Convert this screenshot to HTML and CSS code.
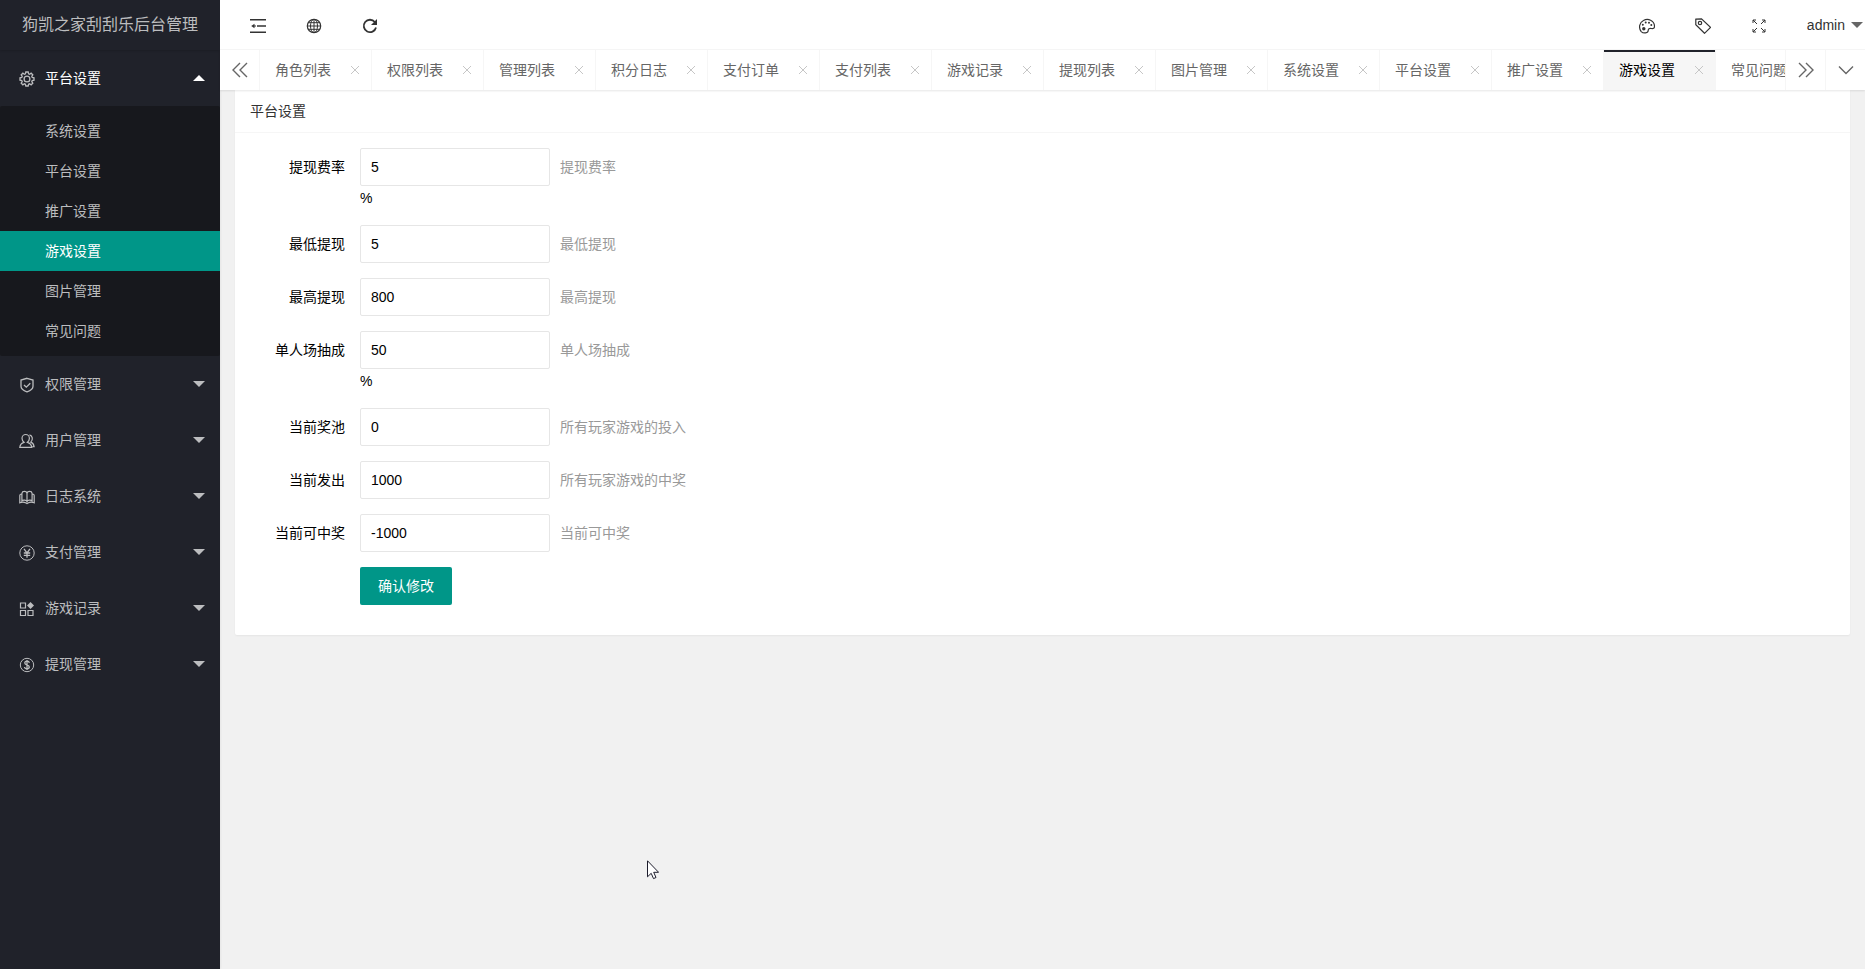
FILE: index.html
```html
<!DOCTYPE html>
<html lang="zh-CN">
<head>
<meta charset="utf-8">
<title>狗凯之家刮刮乐后台管理</title>
<link rel="stylesheet" href="styles.css">
</head>
<body>
<div class="app">
  <aside class="side">
    <div class="logo">狗凯之家刮刮乐后台管理</div>
    <nav class="menu">
      <a class="item open"><svg class="ico" viewBox="0 0 16 16"><path stroke-width="1.300" d="M6.800 1h2.400l.4 1.800 1 .4 1.500-1 1.700 1.700-1 1.500.4 1 1.800.4v2.400l-1.800.4-.4 1 1 1.500-1.700 1.700-1.500-1-1 .4-.4 1.800H6.800l-.4-1.800-1-.4-1.500 1-1.700-1.700 1-1.500-.4-1L1 9.200V6.800l1.800-.4.4-1-1-1.500 1.700-1.700 1.500 1 1-.4z"/><circle cx="8" cy="8" r="2.900" stroke-width="1.300"/></svg><span>平台设置</span><i class="tri up"></i></a>
      <div class="sub">
        <a>系统设置</a><a>平台设置</a><a>推广设置</a><a class="on">游戏设置</a><a>图片管理</a><a>常见问题</a>
      </div>
      <a class="item"><svg class="ico" viewBox="0 0 16 16"><path d="M8 1.300 14 3v6.200c0 2.500-3 4.600-6 5.600-3-1-6-3.100-6-5.600V3zM5 8l2.300 2.200 4-4" stroke-width="1.300"/></svg><span>权限管理</span><i class="tri"></i></a>
      <a class="item"><svg class="ico" viewBox="0 0 16 16"><path stroke-width="1.200" d="M5 9.300C3.800 8.300 3 6.800 3 5.200a3.700 3.700 0 0 1 7.400 0c0 1.600-.8 3.100-2 4.100 2.500.7 4 2.200 4.400 5H.8c.3-2.800 1.800-4.300 4.200-5zM10.500 1.900c3.200.9 3.800 4.600 1.300 7.200 1.900.7 3 2.300 3.300 4.500h-1.600"/></svg><span>用户管理</span><i class="tri"></i></a>
      <a class="item"><svg class="ico" viewBox="0 0 16 16"><path stroke-width="1.200" d="M8 4.300v9M8 4.300C7.500 1.700 3.300 1.700 2.900 4.300v7.500c1.300-1 4-.8 5.100.7 1.100-1.500 3.800-1.700 5.100-.7V4.300C12.700 1.700 8.500 1.700 8 4.300M2.700 5C1.400 5 .8 5.500.8 6.500v7.300c2-.8 4.200-.8 5.700-.1L8 14.500l1.500-.8c1.500-.7 3.700-.7 5.700.1V6.500c0-1-.6-1.500-1.900-1.500"/></svg><span>日志系统</span><i class="tri"></i></a>
      <a class="item"><svg class="ico" viewBox="0 0 16 16"><circle cx="8" cy="8" r="7.200"/><path d="m5 3.800 3 4 3-4M8 7.800v5M4.800 8h6.400M4.800 10.300h6.400" stroke-width="1.300"/></svg><span>支付管理</span><i class="tri"></i></a>
      <a class="item"><svg class="ico" viewBox="0 0 16 16"><path stroke-width="1.200" d="M1.500 2h5v5h-5zM1.500 9.500h5v5h-5zM9 9.500h5v5H9z"/><path class="fill" d="m11.500 1 3.500 3.500L11.500 8 8 4.500z"/></svg><span>游戏记录</span><i class="tri"></i></a>
      <a class="item"><svg class="ico" viewBox="0 0 16 16"><circle cx="8" cy="8" r="6.700"/><path d="M10.300 5.800C10 3.600 5.800 3.600 5.800 6c0 2.300 4.500 1.500 4.500 4 0 2.400-4.500 2.400-4.800 0M8 3v10" stroke-width="1.300"/></svg><span>提现管理</span><i class="tri"></i></a>
    </nav>
  </aside>
  <div class="main">
    <header class="bar">
      <svg class="tool" viewBox="0 0 16 16"><path d="M0 1.800h16M7 8h9M0 14.200h16" stroke-width="1.500"/><path class="fill" d="M1.200 8 4.500 5.800v4.400z"/><path d="M4 8h2"/></svg>
      <svg class="tool" viewBox="0 0 16 16"><circle cx="8" cy="8" r="6.700" stroke-width="1.200"/><ellipse cx="8" cy="8" rx="3.500" ry="6.700"/><path d="M8 1.300v13.400M1.300 8h13.400M2.300 4.700h11.400M2.300 11.300h11.400"/></svg>
      <svg class="tool" viewBox="0 0 16 16"><path d="M12.800 4A6.200 6.200 0 1 0 14 9.500" stroke-width="1.800"/><path class="fill" d="M15 1v6H9z"/></svg>
      <span class="grow"></span>
      <svg class="tool" viewBox="0 0 16 16"><path stroke-width="1.200" d="M2.200 13.600C-.6 10 .3 4.500 4.500 2.500 9-.1 15.200 2.400 15.500 8c.1 2.500-1.300 2.800-3.300 2.500-2-.2-3 .5-3 2 0 2.600-4.500 3.400-7 1.100z"/><path d="M3.800 6.700v.1M6.700 4.500v.1M10 4.700v.1M12.300 7v.1" stroke-width="2" stroke-linecap="round"/><circle class="fill" cx="4.800" cy="10.800" r="1.700"/></svg>
      <svg class="tool" viewBox="0 0 16 16"><path stroke-width="1.200" d="M.8 1.200 6.500.8l9 8.500-6 6L.8 6.800z"/><circle cx="5" cy="5" r="1.700" stroke-width="1.200"/></svg>
      <svg class="tool" viewBox="0 0 16 16"><path d="M2 5V2h3M2 2l4 4M11 2h3v3M14 2l-4 4M2 11v3h3M2 14l4-4M11 14h3v-3M14 14l-4-4"/></svg>
      <span class="user">admin<i class="tri"></i></span>
    </header>
    <div class="tabs">
      <span class="ctl"><svg viewBox="0 0 16 16"><path d="M8 1 1 8l7 7M15 1 8 8l7 7"/></svg></span>
      <div class="list">
        <a>角色列表<b></b></a><a>权限列表<b></b></a><a>管理列表<b></b></a><a>积分日志<b></b></a><a>支付订单<b></b></a><a>支付列表<b></b></a><a>游戏记录<b></b></a><a>提现列表<b></b></a><a>图片管理<b></b></a><a>系统设置<b></b></a><a>平台设置<b></b></a><a>推广设置<b></b></a><a class="on">游戏设置<b></b></a><a>常见问题<b></b></a>
      </div>
      <span class="ctl r"><svg viewBox="0 0 16 16"><path d="m1 1 7 7-7 7M8 1l7 7-7 7"/></svg></span>
      <span class="ctl r"><svg viewBox="0 0 16 16"><path d="m1 4.500 7 7 7-7"/></svg></span>
    </div>
    <main class="body">
      <section class="card">
        <h2>平台设置</h2>
        <form class="form">
          <div class="row"><label>提现费率</label><div><input value="5"><p>%</p></div><em>提现费率</em></div>
          <div class="row"><label>最低提现</label><div><input value="5"></div><em>最低提现</em></div>
          <div class="row"><label>最高提现</label><div><input value="800"></div><em>最高提现</em></div>
          <div class="row"><label>单人场抽成</label><div><input value="50"><p>%</p></div><em>单人场抽成</em></div>
          <div class="row"><label>当前奖池</label><div><input value="0"></div><em>所有玩家游戏的投入</em></div>
          <div class="row"><label>当前发出</label><div><input value="1000"></div><em>所有玩家游戏的中奖</em></div>
          <div class="row"><label>当前可中奖</label><div><input value="-1000"></div><em>当前可中奖</em></div>
          <div class="row"><label></label><button type="button">确认修改</button></div>
        </form>
      </section>
    </main>
  </div>
</div>
<svg class="cursor" viewBox="0 0 12 20"><path d="M.5.800v16l3.700-3.500 2.300 5.300 2.500-1.100-2.300-5.200h4.900z"/></svg>
</body>
</html>
```
FILE: styles.css
```css
* { box-sizing: border-box; }
body { margin: 0; font: 14px/24px "Liberation Sans", "Noto Sans CJK SC", sans-serif; color: #000; }
.app { display: flex; height: 969px; overflow: hidden; background: #f1f1f1; }
svg { fill: none; stroke: currentColor; display: block; }
svg .fill { fill: currentColor; stroke: none; }

.side { width: 220px; flex: none; background: #20222a; color: #bcbdbf; box-shadow: 1px 0 2px rgba(0,0,0,.05); }
.logo { height: 50px; line-height: 49px; text-align: center; font-size: 16px; box-shadow: 0 1px 2px rgba(0,0,0,.15); }
.item { display: flex; align-items: center; height: 56px; padding: 0 15px 0 19px; }
.item span { flex: 1; margin-left: 10px; }
.item.open { color: #fff; }
.ico { width: 16px; height: 16px; margin-top: 1px; color: #bcbdbf; }
.tri { border: 6px solid transparent; border-top-color: currentColor; border-bottom: 0; }
.tri.up { border-top: 0; border-bottom: 6px solid #fff; }
.sub { padding: 5px 0; background: #17181d; border-radius: 2px; }
.sub a { display: block; height: 40px; line-height: 40px; padding-left: 45px; }
.sub .on { background: #009688; color: #fff; }

.main { flex: 1; min-width: 0; }
.bar { display: flex; align-items: center; height: 50px; padding-left: 22px; background: #fff; border-bottom: 1px solid #f6f6f6; color: #333; }
.tool { width: 16px; height: 16px; margin: 3px 32px 0 8px; }
.grow { flex: 1; }
.user { display: flex; align-items: center; gap: 6px; margin-left: 8px; padding-right: 2px; }
.user .tri { color: #666; }
.tabs { position: relative; display: flex; height: 40px; background: #fff; color: #666; box-shadow: 0 1px 2px rgba(0,0,0,.1); }
.ctl { width: 40px; flex: none; display: flex; align-items: center; justify-content: center; border-right: 1px solid #f6f6f6; }
.ctl.r { border-right: 0; border-left: 1px solid #f6f6f6; }
.ctl svg { width: 16px; height: 16px; stroke-width: 1.4; }
.list { flex: 1; display: flex; overflow: hidden; }
.list a { position: relative; width: 112px; flex: none; display: flex; align-items: center; gap: 18px; padding-left: 15px; white-space: nowrap; border-right: 1px solid #f6f6f6; }
.list b { width: 11px; height: 11px; background: linear-gradient(45deg, transparent 45%, #c6c6c6 45% 55%, transparent 55%), linear-gradient(-45deg, transparent 45%, #c6c6c6 45% 55%, transparent 55%); background-size: 8px 8px; background-position: center; background-repeat: no-repeat; }
.list .on { background: #f6f6f6; color: #000; }
.list .on::after { content: ""; position: absolute; left: 0; right: 0; top: 0; height: 2px; background: #20222a; }

.body { padding: 0 15px; }
.card { background: #fff; border-radius: 0 0 2px 2px; box-shadow: 0 1px 2px rgba(0,0,0,.05); }
.card h2 { margin: 0; height: 43px; padding: 0 15px; line-height: 42px; font-size: 14px; font-weight: 400; color: #333; border-bottom: 1px solid #f6f6f6; }
.form { padding: 15px; }
.row { display: flex; margin-bottom: 15px; }
.row label { width: 110px; padding: 0 15px; line-height: 38px; text-align: right; white-space: nowrap; }
.row input { display: block; width: 190px; height: 38px; padding: 0 0 0 10px; border: 1px solid #e6e6e6; border-radius: 2px; font: inherit; color: #000; }
.row p { margin: 0; }
.row em { margin-left: 10px; line-height: 38px; font-style: normal; color: #999; }
.row button { width: 92px; height: 38px; padding: 0; border: 0; border-radius: 2px; background: #009688; color: #fff; font: inherit; }
.cursor { position: absolute; left: 647px; top: 860px; width: 12px; height: 20px; fill: #fff; stroke: #1c1c2c; }
```
